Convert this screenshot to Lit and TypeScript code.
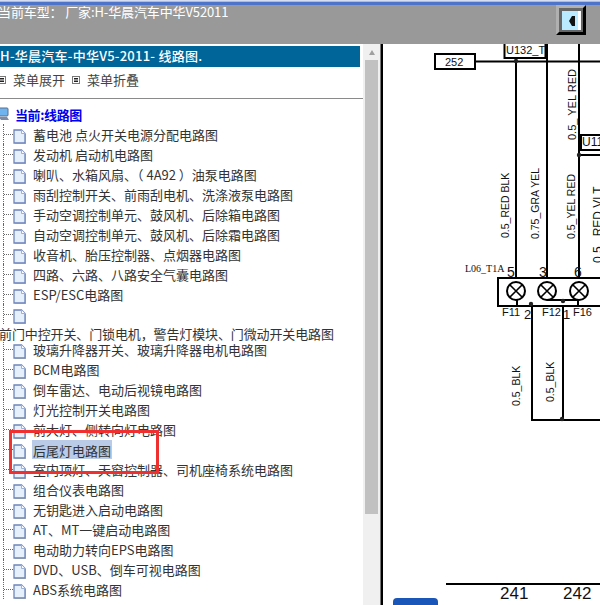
import { LitElement, html, css, svg } from "lit";
import { customElement } from "lit/decorators.js";

const group1 = ["蓄电池 点火开关电源分配电路图","发动机 启动机电路图","喇叭、水箱风扇、（ 4A92 ）油泵电路图","雨刮控制开关、前雨刮电机、洗涤液泵电路图","手动空调控制单元、鼓风机、后除箱电路图","自动空调控制单元、鼓风机、后除霜电路图","收音机、胎压控制器、点烟器电路图","四路、六路、八路安全气囊电路图","ESP/ESC电路图",""];
const group2 = ["玻璃升降器开关、玻璃升降器电机电路图","BCM电路图","倒车雷达、电动后视镜电路图","灯光控制开关电路图","前大灯、侧转向灯电路图","后尾灯电路图","室内顶灯、天窗控制器、司机座椅系统电路图","组合仪表电路图","无钥匙进入启动电路图","AT、MT一键启动电路图","电动助力转向EPS电路图","DVD、USB、倒车可视电路图","ABS系统电路图"];

const docIcon = html`<svg class="doc" viewBox="0 0 13 15" width="13" height="15">
  <path d="M1 1H8.500L12 4.500V14H1Z" fill="#e6effc" stroke="#6d84bb" stroke-width="1.300"/>
  <path d="M8.500 1V4.500H12" fill="#fff" stroke="#9db0d6" stroke-width="1"/>
  <path d="M12.500 5V14.500H2" fill="none" stroke="#8b98b3" stroke-width="1"/>
</svg>`;

const menuIcon = html`<svg class="mi" viewBox="0 0 8 8" width="8" height="8">
  <rect x=".5" y=".5" width="7" height="7" fill="#fff" stroke="#777"/>
  <path d="M2 2.500H6M2 4H6M2 5.500H6" stroke="#222" stroke-width="1"/>
</svg>`;

const v = (x: number, y: number, t: string, s = 10.5) => svg`<text class="lab" font-size=${s} transform="translate(${x} ${y}) rotate(-90)">${t}</text>`;
const lamp = (cx: number) => svg`<circle cx=${cx} cy="291" r="9" fill="#fff" stroke="#000" stroke-width="2"/>
  <path d="M${cx - 6} ${285}L${cx + 6} ${297}M${cx + 6} ${285}L${cx - 6} ${297}" stroke="#000" stroke-width="1.600"/>`;
const h = (x: number, y: number, t: string, s = 12) => svg`<text class="lab" x=${x} y=${y} font-size=${s}>${t}</text>`;
const dot = (x: number, y: number) => svg`<circle cx=${x} cy=${y} r="2.200" fill="#222"/>`;

@customElement("app-root")
export class AppRoot extends LitElement {
  static styles = css`
    :host { display: flex; flex-direction: column; position: relative; width: 600px; height: 605px; overflow: hidden; background: #fff; font-family: "Noto Sans CJK SC", "Open Sans", sans-serif; }
    .strip { height: 5px; flex: none; background: linear-gradient(180deg, #d5def2 0 1px, #a9bce6 1px 2px, #4d74c9 2px 5px); }
    .top { height: 39px; flex: none; background: #999; display: flex; justify-content: space-between; color: #fff; font-size: 13px; }
    .title { margin: -1px 0 0 -2px; line-height: 15px; height: 15px; white-space: pre; letter-spacing: -0.12px; }
    .sw { width: 30px; height: 30px; margin-right: 14px; box-sizing: border-box; border: 3px solid; border-color: #b0b0b0 #000 #000 #b0b0b0; background: #666; padding: 3px 2px 2px 3px; }
    .swin { height: 100%; box-sizing: border-box; background: #b9eaff; border-right: 3px solid #fff; display: flex; align-items: center; justify-content: center; padding-left: 3px; }
    .swin svg { display: block; }
    .main { flex: 1; min-height: 0; display: flex; }
    .left { width: 363px; flex: none; overflow: hidden; }
    .bar { margin-top: 2px; width: 360px; height: 21px; background: #006699; color: #fff; font-size: 13px; font-weight: 500; line-height: 20px; white-space: nowrap; letter-spacing: 0.25px; }
    .menu { height: 31px; box-sizing: border-box; padding-bottom: 6px; display: flex; align-items: center; font-size: 13px; color: #444; margin-left: -2px; }
    .mi { display: block; flex: none; margin-right: 7px; }
    .menu span { margin-right: 7px; }
    .rule { height: 1px; background: #8a8a8a; margin-bottom: 7px; }
    .cur { height: 20px; margin-top: -2px; display: flex; align-items: center; margin-left: -2px; color: #0000ee; font-weight: 700; font-size: 13px; gap: 5px; letter-spacing: -0.4px; }
    .row { height: 20px; display: flex; align-items: center; position: relative; font-size: 13px; color: #333; white-space: nowrap; padding-left: 13px; }
    .row::before { content: ""; position: absolute; left: 3px; top: 0; bottom: 0; border-left: 1px dotted #666; }
    .row::after { content: ""; position: absolute; left: 4px; top: 10px; width: 9px; border-top: 1px dotted #666; }
    .doc { flex: none; display: block; margin-top: 4px; }
    .txt { margin: 2px 0 0 6px; padding: 0 1px; line-height: 16px; }
    .sel { background: #b9cbe6; margin-top: 0; padding: 3px 1px 0; }
    .grp { height: 14px; line-height: 14px; font-size: 13px; color: #333; white-space: nowrap; margin: 3px 0 -2px -1px; letter-spacing: -0.12px; }
    .sb { width: 17px; flex: none; background: #f0f0f0; display: flex; flex-direction: column; align-items: center; }
    .arrow { width: 0; height: 0; margin: 6px 0 5px; border-left: 3.5px solid transparent; border-right: 3.5px solid transparent; border-bottom: 5px solid #a0a0a0; }
    .thumb { width: 13px; height: 454px; background: #c1c1c1; }
    .split { width: 3px; flex: none; background: linear-gradient(90deg, #777 0 1px, #000 1px 3px); }
    .dia { flex: 1; position: relative; background: #fff; overflow: hidden; }
    .dia svg { display: block; }
    .lab { font-family: "Liberation Sans", Arial, sans-serif; fill: #111; }
    .ser { font-family: "Liberation Serif", serif; fill: #111; }
    .blue { position: absolute; left: 10px; bottom: 0; width: 45px; height: 7px; background: #1a56b8; border-radius: 4px 4px 0 0; }
    .red { position: absolute; left: 9px; top: 430px; width: 150px; height: 44px; box-sizing: border-box; border: 3px solid #ee3030; pointer-events: none; }
  `;

  render() {
    return html`
      <div class="strip"></div>
      <div class="top">
        <p class="title">当前车型： 厂家:H-华晨汽车中华V52011</p>
        <div class="sw"><div class="swin"><svg width="6" height="10" viewBox="0 0 6 10"><path d="M3 0L0 5L3 10H6V0Z" fill="#111"/></svg></div></div>
      </div>
      <div class="main">
        <div class="left">
          <div class="bar">H-华晨汽车-中华V5-2011- 线路图.</div>
          <div class="menu">${menuIcon}<span>菜单展开</span>${menuIcon}<span>菜单折叠</span></div>
          <div class="rule"></div>
          <div class="cur">
            <svg width="12" height="14" viewBox="0 0 12 14"><rect x="0" y="1" width="10" height="8" rx="1" fill="#6fb4ee" stroke="#5a6c8c"/><path d="M1 10H9L11 13H3Z" fill="#7f8ca6"/></svg>
            <span>当前:线路图</span>
          </div>
          ${group1.map((t) => html`<div class="row">${docIcon}<span class="txt">${t}</span></div>`)}
          <div class="grp">前门中控开关、门锁电机，警告灯模块、门微动开关电路图</div>
          ${group2.map((t) => html`<div class="row">${docIcon}<span class="txt ${t === "后尾灯电路图" ? "sel" : ""}">${t}</span></div>`)}
        </div>
        <div class="sb"><div class="arrow"></div><div class="thumb"></div></div>
        <div class="split"></div>
        <div class="dia">
          <svg width="217" height="561" viewBox="383 44 217 561">
            <g fill="none" stroke="#000" stroke-width="2">
              <rect x="435" y="54" width="40" height="15" fill="#fff"/>
              <path d="M475 61.500H600"/>
              <rect x="504.500" y="38" width="41" height="20" fill="#fff"/>
              <path d="M516 60V278M547 44V278M579 44V278"/>
              <rect x="581" y="135" width="30" height="15"/>
              <path d="M579 155H600"/>
              <rect x="498" y="278" width="110" height="28"/>
              <path d="M517 300V306M547 300H578M578 300V306M532 306V420H600M563 306V420"/>
              <path d="M446 584H600" />
            </g>
            ${lamp(516)}${lamp(547)}${lamp(579)}${lamp(611)}
            ${dot(516, 61)}${dot(579, 155)}${dot(531, 304)}${dot(563, 301)}${dot(562, 419)}
            ${h(506, 54, "U132_T", 11)}
            ${h(445, 66, "252", 11)}
            ${h(582, 146, "U11", 12)}
            ${v(576, 140, "0.5_ YEL RED", 11)}
            ${v(509, 238, "0.5_RED BLK")}
            ${v(539, 239, "0.75_GRA YEL")}
            ${v(575, 239, "0.5_YEL RED")}
            ${v(602, 263, "0.5_ RED VLT", 12)}
            ${v(520, 406, "0.5_BLK")}
            ${v(554, 402, "0.5_BLK")}
            <text class="ser" x="465" y="272" font-size="10">L06_T1A</text>
            ${h(507, 277, "5", 14)}${h(539, 277, "3", 14)}${h(574, 277, "6", 14)}
            ${h(502, 316, "F11", 11)}${h(542, 316, "F12", 11)}${h(573, 316, "F16", 11)}
            ${h(524, 319, "2", 13)}${h(563, 319, "1", 13)}
            ${h(500, 599, "241", 17)}${h(563, 599, "242", 17)}
          </svg>
          <div class="blue"></div>
        </div>
      </div>
      <div class="red"></div>
    `;
  }
}
